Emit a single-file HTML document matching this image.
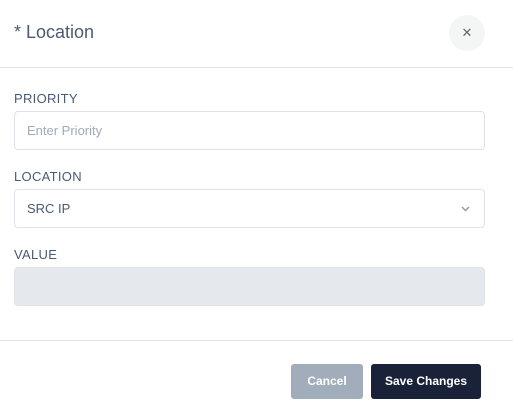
<!DOCTYPE html><html><head><style>
body{margin:0;width:513px;height:414px;background:#fff;font-family:"Liberation Sans",sans-serif;position:relative;overflow:hidden}
.a{position:absolute}
.t{left:14px;top:22px;font-size:18px;color:#4a5a73}
.x{left:449px;top:15px;width:36px;height:36px;border-radius:50%;background:#f4f5f5;color:#666;text-align:center;line-height:36px;font-size:13px}
.hr{left:0;width:513px;height:1px;background:#e2e5ea}
.l{left:14px;font-size:13px;color:#4a5a73;letter-spacing:.3px}
.i{left:14px;width:469px;height:37px;border:1px solid #dfe3e8;border-radius:4px;font-size:13px;line-height:37px;box-sizing:content-box}
.b{top:364px;height:35px;border-radius:3px;color:#fff;font-size:12px;font-weight:bold;text-align:center;line-height:35px}
</style></head><body>
<div class="a t">* Location</div>
<div class="a x">✕</div>
<div class="a hr" style="top:67px"></div>
<div class="a l" style="top:91px">PRIORITY</div>
<div class="a i" style="top:111px;color:#a0aab8;text-indent:12px">Enter Priority</div>
<div class="a l" style="top:169px">LOCATION</div>
<div class="a i" style="top:189px;color:#4a5a73;text-indent:12px">SRC IP<svg style="position:absolute;right:14px;top:16px" width="9" height="6" viewBox="0 0 9 6"><path d="M1 1l3.5 3.5L8 1" stroke="#999" stroke-width="1.5" fill="none"/></svg></div>
<div class="a l" style="top:247px">VALUE</div>
<div class="a i" style="top:267px;background:#e5e9ed"></div>
<div class="a hr" style="top:340px"></div>
<div class="a b" style="left:291px;width:72px;background:#a2adbb">Cancel</div>
<div class="a b" style="left:371px;width:110px;background:#1a223a">Save Changes</div>
</body></html>
